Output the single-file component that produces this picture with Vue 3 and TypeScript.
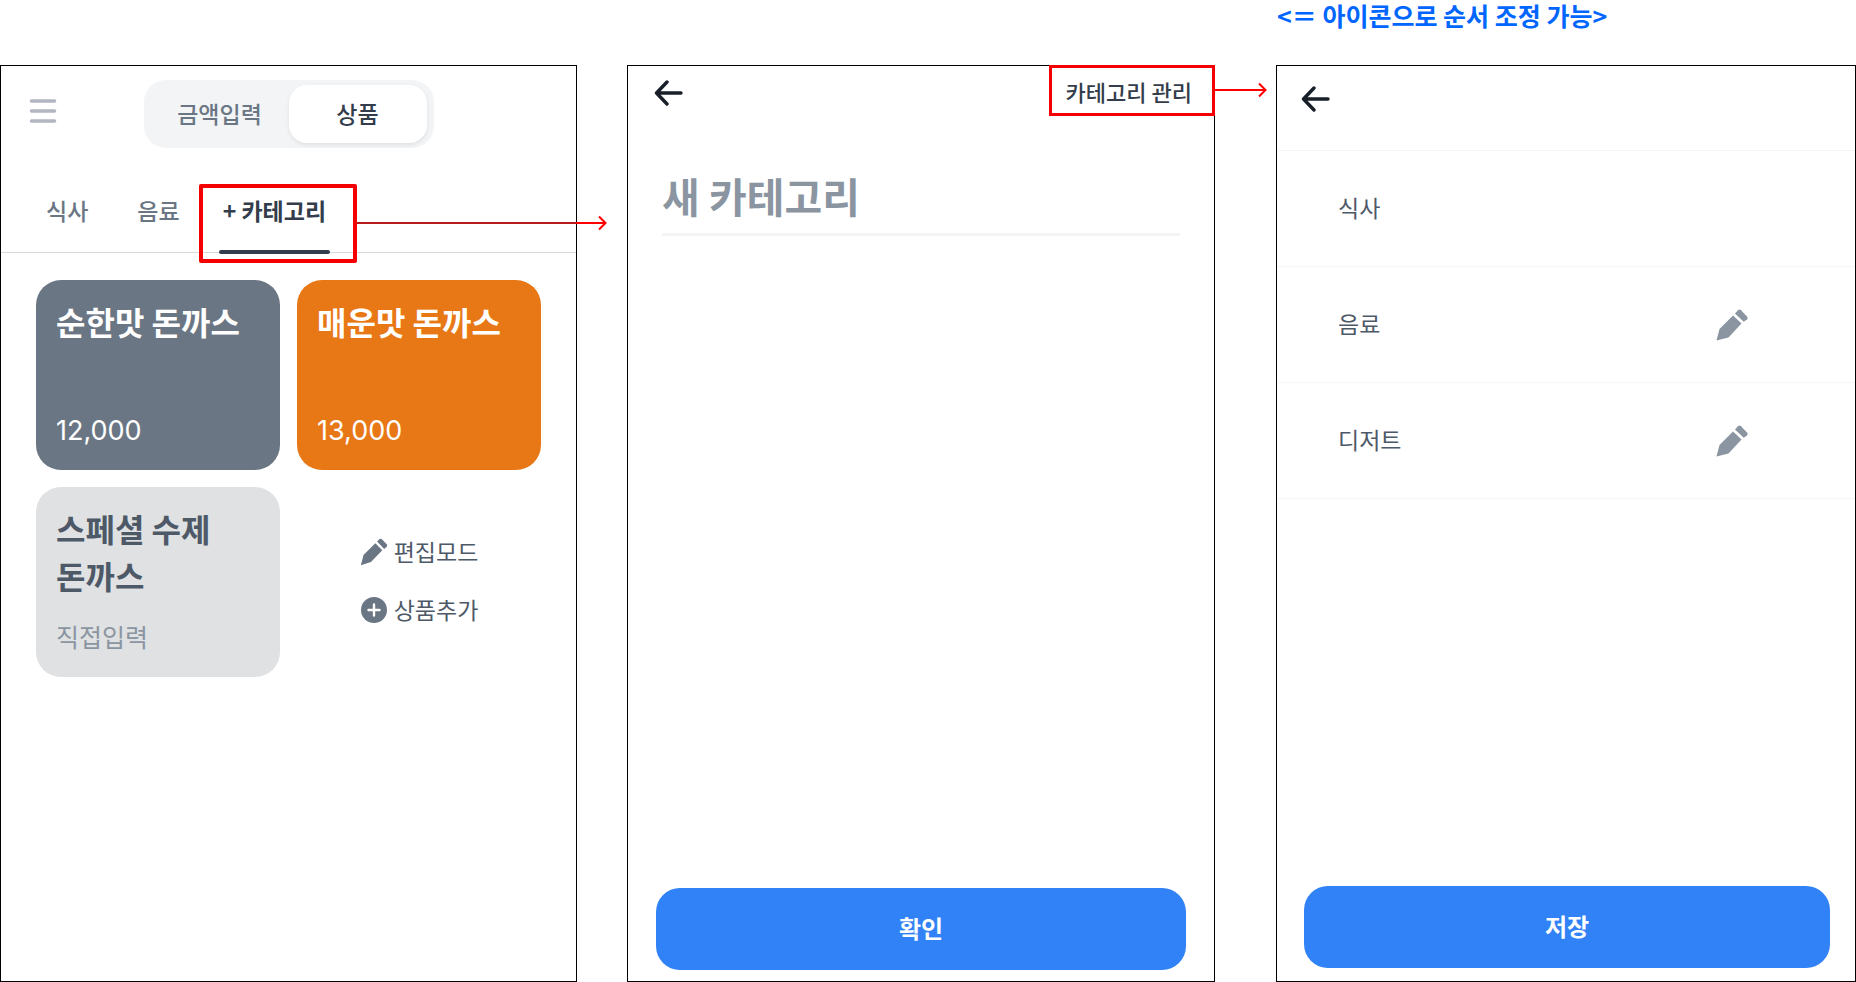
<script setup lang="ts">
import { ref } from 'vue'

interface Product {
  name: string
  price: string
  tone: 'slate' | 'orange' | 'muted'
}

interface Category {
  name: string
  editable: boolean
}

const categories: Category[] = [
  { name: '식사', editable: false },
  { name: '음료', editable: true },
  { name: '디저트', editable: true },
]

const products: Product[] = [
  { name: '순한맛 돈까스', price: '12,000', tone: 'slate' },
  { name: '매운맛 돈까스', price: '13,000', tone: 'orange' },
  { name: '스페셜 수제 돈까스', price: '직접입력', tone: 'muted' },
]

const modes = ['금액입력', '상품']
const mode = ref('상품')
const newCategory = ref('')
</script>

<template>
  <main class="board">
    <section class="screen screen-products">
      <header class="topbar">
        <button class="icon-button menu" type="button" aria-label="메뉴">
          <svg width="28" height="24" viewBox="0 0 28 24">
            <path d="M2.5 2H25.5M2.5 12H25.5M2.5 22H25.5" stroke="#b2b5c2" stroke-width="3.6" stroke-linecap="round" />
          </svg>
        </button>
        <div class="segmented">
          <button
            v-for="m in modes"
            :key="m"
            type="button"
            class="segment"
            :class="{ active: m === mode }"
            @click="mode = m"
          >
            {{ m }}
          </button>
        </div>
      </header>

      <nav class="tabs">
        <div class="tab-group">
          <button v-for="c in categories.slice(0, 2)" :key="c.name" type="button" class="tab">{{ c.name }}</button>
        </div>
        <button type="button" class="tab active">
          + 카테고리
          <span class="callout callout-tab">
            <svg class="arrow" width="250" height="16" viewBox="0 0 250 16" fill="none" stroke-width="2">
              <path d="M0 8H219" stroke="#b81c1c" />
              <path d="M219 8H249M242 1.500L248.500 8L242 14.500" stroke="#ff0000" />
            </svg>
          </span>
        </button>
      </nav>

      <div class="products">
        <button v-for="p in products" :key="p.name" type="button" class="card" :class="p.tone">
          <span class="card-name">{{ p.name }}</span>
          <span class="card-price">{{ p.price }}</span>
        </button>
        <div class="actions">
          <button type="button" class="action">
            <svg width="28" height="28" viewBox="0 0 32 32" fill="#6b7684">
              <path d="M1 31L4 19.500L17.500 6L25.500 14L12.500 27.500Z" />
              <path d="M19.500 4L22 1.500Q23.500 0.300 25 1.500L30.500 7Q31.700 8.500 30.500 10L27.700 12.500Z" />
            </svg>
            <span>편집모드</span>
          </button>
          <button type="button" class="action">
            <svg width="28" height="28" viewBox="0 0 28 28">
              <circle cx="14" cy="14" r="13" fill="#6b7684" />
              <path d="M14 8.500V19.500M8.500 14H19.500" stroke="#fff" stroke-width="2.400" stroke-linecap="round" />
            </svg>
            <span>상품추가</span>
          </button>
        </div>
      </div>
    </section>

    <section class="screen screen-new">
      <header class="new-header">
        <button class="icon-button" type="button" aria-label="뒤로">
          <svg width="30" height="26" viewBox="0 0 30 26">
            <path d="M27 13H3M13 2L2.500 13L13 24" fill="none" stroke="#191f28" stroke-width="3.400" stroke-linecap="round" stroke-linejoin="round" />
          </svg>
        </button>
        <button class="manage" type="button">
          카테고리 관리
          <span class="callout callout-manage">
            <svg class="arrow" width="52" height="16" viewBox="0 0 52 16" fill="none" stroke="#ff0000" stroke-width="2">
              <path d="M0 8H51M44 1.500L50.500 8L44 14.500" />
            </svg>
          </span>
        </button>
      </header>
      <input v-model="newCategory" class="name-input" type="text" placeholder="새 카테고리" aria-label="새 카테고리" />
      <button class="primary" type="button">확인</button>
    </section>

    <div class="manage-column">
      <p class="note">&lt;＝ 아이콘으로 순서 조정 가능&gt;</p>
      <section class="screen screen-manage">
        <header class="manage-header">
          <button class="icon-button" type="button" aria-label="뒤로">
            <svg width="30" height="26" viewBox="0 0 30 26">
              <path d="M27 13H3M13 2L2.500 13L13 24" fill="none" stroke="#191f28" stroke-width="3.400" stroke-linecap="round" stroke-linejoin="round" />
            </svg>
          </button>
        </header>
        <ul class="rows">
          <li v-for="c in categories" :key="c.name" class="row">
            <span class="row-name">{{ c.name }}</span>
            <button v-if="c.editable" class="icon-button" type="button" :aria-label="c.name + ' 편집'">
              <svg width="32" height="32" viewBox="0 0 32 32" fill="#8b95a1">
                <path d="M0.500 31.500L3.500 20L17 6.500L25.500 14.500L12.500 28.500Z" />
                <path d="M19 4.500L22 1.200Q23.500 0 25 1.200L31 7.500Q32.200 9 31 10.500L27.700 12.700Z" />
              </svg>
            </button>
          </li>
        </ul>
        <button class="primary" type="button">저장</button>
      </section>
    </div>
  </main>
</template>

<style>
body {
  margin: 0;
  background: #fff;
}
</style>

<style scoped>
.board {
  box-sizing: border-box;
  min-height: 100vh;
  display: grid;
  grid-template-columns:
    minmax(0, 577fr) minmax(0, 50fr) minmax(0, 588fr) minmax(0, 61fr)
    minmax(0, 580fr);
  font-family: 'Noto Sans CJK KR', 'Noto Sans', sans-serif;
  color: #4e5968;
}

button {
  margin: 0;
  padding: 0;
  border: 0;
  background: none;
  font: inherit;
  color: inherit;
  cursor: pointer;
}

svg {
  display: block;
}

.screen {
  box-sizing: border-box;
  border: 1px solid #000;
  background: #fff;
  display: flex;
  flex-direction: column;
}

.screen-products {
  grid-column: 1;
  margin-top: 65px;
}

.screen-new {
  grid-column: 3;
  margin-top: 65px;
}

.manage-column {
  grid-column: 5;
  display: flex;
  flex-direction: column;
}

.screen-manage {
  flex: 1;
}

.note {
  margin: 0;
  height: 65px;
  padding-left: 1px;
  font-size: 25px;
  line-height: 30px;
  font-weight: 700;
  color: #0066ff;
  white-space: nowrap;
}

.topbar {
  display: grid;
  grid-template-columns: 1fr auto 1fr;
  padding: 14px 28px 0;
}

.menu {
  justify-self: start;
  align-self: start;
  margin-top: 19px;
}

.segmented {
  box-sizing: border-box;
  height: 68px;
  padding: 5px 7px;
  display: flex;
  border-radius: 22px;
  background: #f2f4f6;
}

.segment {
  width: 138px;
  padding-bottom: 2px;
  border-radius: 18px;
  font-size: 23px;
  font-weight: 500;
  color: #6b7684;
}

.segment.active {
  color: #333d4b;
  background: #fff;
  box-shadow: 0 2px 4px rgba(0, 0, 0, 0.08);
}

.tabs {
  margin-top: 21px;
  height: 83px;
  padding-left: 41px;
  display: flex;
  gap: 35px;
  border-bottom: 1px solid #d5d8dc;
}

.tab-group {
  display: flex;
  gap: 41px;
}

.tab {
  position: relative;
  padding: 0 4px 2px;
  font-size: 23px;
  font-weight: 500;
  color: #6b7684;
  white-space: nowrap;
}

.tab.active {
  font-weight: 700;
  color: #333d4b;
}

.tab.active::after {
  content: '';
  position: absolute;
  left: 0;
  right: 0;
  bottom: -2px;
  height: 4px;
  border-radius: 2px;
  background: #333d4b;
}

.callout {
  position: absolute;
  pointer-events: none;
  z-index: 1;
}

.callout-tab {
  inset: 15px -27px -11px -20px;
  border: 4px solid #f40000;
  border-radius: 2px;
}

.callout-manage {
  inset: -1px 0 0 0;
  border: 3px solid #f40000;
}

.arrow {
  position: absolute;
  left: 100%;
  top: 50%;
  margin-top: -9px;
}

.callout-tab .arrow {
  margin-left: 4px;
}

.callout-manage .arrow {
  margin-left: 3px;
}

.products {
  padding: 27px 35px;
  display: grid;
  grid-template-columns: 1fr 1fr;
  gap: 17px;
}

.card {
  box-sizing: border-box;
  min-height: 190px;
  padding: 18px 20px 22px;
  display: flex;
  flex-direction: column;
  justify-content: space-between;
  border-radius: 25px;
  text-align: left;
  color: #fff;
  word-break: keep-all;
}

.card-name {
  font-size: 32px;
  line-height: 47px;
  font-weight: 700;
}

.card-price {
  font-family: Inter, 'Noto Sans CJK KR', sans-serif;
  font-size: 27px;
  line-height: 34px;
}

.slate {
  background: #6b7684;
}

.orange {
  background: #e87716;
}

.muted {
  background: #dfe1e3;
  color: #4e5968;
}

.muted .card-price {
  font-size: 25px;
  color: #8b95a1;
}

.actions {
  padding-bottom: 2px;
  display: flex;
  flex-direction: column;
  align-items: center;
  justify-content: center;
  gap: 21px;
}

.action {
  display: flex;
  align-items: center;
  gap: 6px;
  font-size: 23px;
  line-height: 34px;
}

.action span,
.row-name {
  padding-bottom: 3px;
}

.new-header {
  display: flex;
  justify-content: space-between;
  align-items: flex-start;
}

.new-header .icon-button {
  margin: 14px 0 0 26px;
}

.manage {
  position: relative;
  height: 50px;
  margin-right: -1px;
  padding: 0 23px 0 17px;
  font-size: 22px;
  font-weight: 500;
  color: #333d4b;
  white-space: nowrap;
}

.name-input {
  min-width: 0;
  margin: 43px 34px 0;
  height: 72px;
  padding: 0 0 2px;
  border: 0;
  border-bottom: 3px solid #f2f4f6;
  outline: 0;
  background: none;
  font: inherit;
  font-size: 41px;
  font-weight: 700;
  color: #333d4b;
}

.name-input::placeholder {
  color: #8b95a1;
  opacity: 1;
}

.primary {
  height: 82px;
  margin: auto 28px 11px;
  padding-bottom: 4px;
  border-radius: 24px;
  background: #3182f6;
  font-size: 24px;
  font-weight: 700;
  color: #fff;
}

.screen-manage .primary {
  margin: auto 25px 13px 27px;
}

.manage-header {
  box-sizing: border-box;
  height: 85px;
  padding: 20px 24px 0;
  border-bottom: 1px solid #f2f4f6;
}

.rows {
  margin: 0;
  padding: 0;
  list-style: none;
}

.row {
  box-sizing: border-box;
  height: 116px;
  padding: 0 107px 0 61px;
  display: flex;
  align-items: center;
  justify-content: space-between;
  border-bottom: 1px solid #f5f6f8;
  font-size: 23px;
}
</style>
